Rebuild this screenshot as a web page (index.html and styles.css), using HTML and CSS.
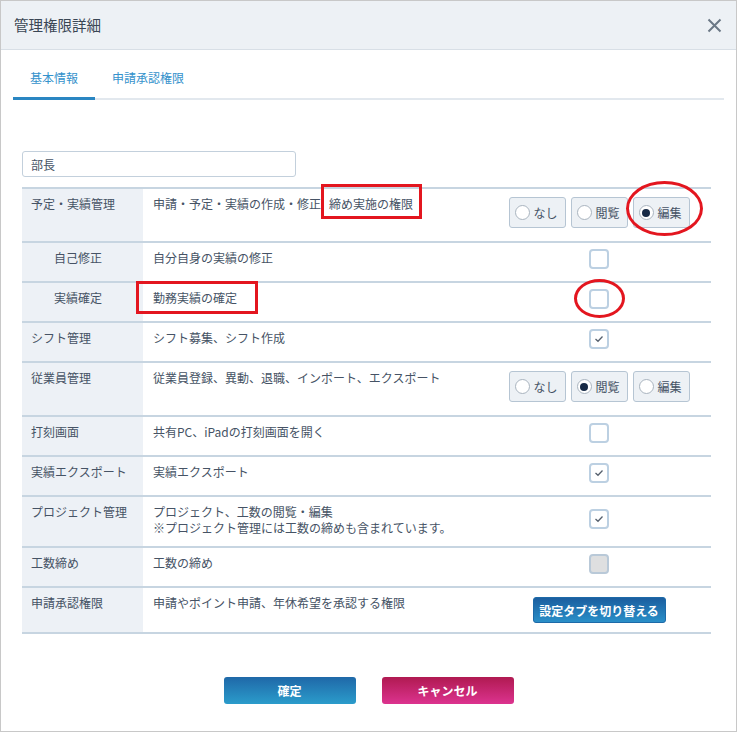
FILE: index.html
```html
<!DOCTYPE html>
<html lang="ja">
<head>
    <meta charset="UTF-8">
    <meta name="viewport" content="width=device-width, initial-scale=1.0">
    <title>管理権限詳細</title>
    <link rel="stylesheet" href="styles.css">
</head>
<body>
    <div class="dialog">
        <div class="dialog-header">
            <h1>管理権限詳細</h1>
            <span class="close-btn">
                <svg width="15" height="15" viewBox="0 0 15 15"><path d="M1.5 1.5 L13.5 13.5 M13.5 1.5 L1.5 13.5" stroke="#6b7886" stroke-width="2" fill="none"/></svg>
            </span>
        </div>

        <ul class="tabs">
            <li class="active">基本情報</li>
            <li>申請承認権限</li>
        </ul>

        <div class="dialog-body">
            <input class="role-name" type="text" value="部長">

            <table class="perm-table">
                <colgroup>
                    <col class="col-label">
                    <col class="col-desc">
                    <col class="col-ctrl">
                </colgroup>
                <tr>
                    <td class="label-cell">予定・実績管理</td>
                    <td class="desc-cell">申請・予定・実績の作成・修正<span class="mark-rect mark-a">締め実施の権限</span></td>
                    <td class="ctrl-cell">
                        <div class="radio-group">
                            <span class="radio-btn"><span class="radio-dot"></span>なし</span>
                            <span class="radio-btn"><span class="radio-dot"></span>閲覧</span>
                            <span class="radio-btn mark-oval oval-a"><span class="radio-dot checked"></span>編集</span>
                        </div>
                    </td>
                </tr>
                <tr>
                    <td class="label-cell sub">自己修正</td>
                    <td class="desc-cell">自分自身の実績の修正</td>
                    <td class="ctrl-cell"><span class="check-box"></span></td>
                </tr>
                <tr>
                    <td class="label-cell sub">実績確定</td>
                    <td class="desc-cell"><span class="mark-rect mark-b">勤務実績の確定</span></td>
                    <td class="ctrl-cell"><span class="check-box mark-oval oval-b"></span></td>
                </tr>
                <tr>
                    <td class="label-cell">シフト管理</td>
                    <td class="desc-cell">シフト募集、シフト作成</td>
                    <td class="ctrl-cell"><span class="check-box checked"><svg width="10" height="8" viewBox="0 0 10 8"><path d="M1.5 4 L4 6.3 L8.5 1.5" stroke="#56606d" stroke-width="1.3" fill="none"/></svg></span></td>
                </tr>
                <tr>
                    <td class="label-cell">従業員管理</td>
                    <td class="desc-cell">従業員登録、異動、退職、インポート、エクスポート</td>
                    <td class="ctrl-cell">
                        <div class="radio-group">
                            <span class="radio-btn"><span class="radio-dot"></span>なし</span>
                            <span class="radio-btn"><span class="radio-dot checked"></span>閲覧</span>
                            <span class="radio-btn"><span class="radio-dot"></span>編集</span>
                        </div>
                    </td>
                </tr>
                <tr>
                    <td class="label-cell">打刻画面</td>
                    <td class="desc-cell">共有PC、iPadの打刻画面を開く</td>
                    <td class="ctrl-cell"><span class="check-box"></span></td>
                </tr>
                <tr>
                    <td class="label-cell">実績エクスポート</td>
                    <td class="desc-cell">実績エクスポート</td>
                    <td class="ctrl-cell"><span class="check-box checked"><svg width="10" height="8" viewBox="0 0 10 8"><path d="M1.5 4 L4 6.3 L8.5 1.5" stroke="#56606d" stroke-width="1.3" fill="none"/></svg></span></td>
                </tr>
                <tr>
                    <td class="label-cell">プロジェクト管理</td>
                    <td class="desc-cell">プロジェクト、工数の閲覧・編集<br>※プロジェクト管理には工数の締めも含まれています。</td>
                    <td class="ctrl-cell"><span class="check-box checked"><svg width="10" height="8" viewBox="0 0 10 8"><path d="M1.5 4 L4 6.3 L8.5 1.5" stroke="#56606d" stroke-width="1.3" fill="none"/></svg></span></td>
                </tr>
                <tr>
                    <td class="label-cell">工数締め</td>
                    <td class="desc-cell">工数の締め</td>
                    <td class="ctrl-cell"><span class="check-box disabled"></span></td>
                </tr>
                <tr>
                    <td class="label-cell">申請承認権限</td>
                    <td class="desc-cell">申請やポイント申請、年休希望を承認する権限</td>
                    <td class="ctrl-cell btn-cell"><button class="switch-btn">設定タブを切り替える</button></td>
                </tr>
            </table>
        </div>

        <div class="dialog-footer">
            <button class="btn btn-ok">確定</button>
            <button class="btn btn-cancel">キャンセル</button>
        </div>
    </div>
</body>
</html>
```

FILE: styles.css
```css
body {
    margin: 0;
    font-family: "Noto Sans CJK JP", "Liberation Sans", sans-serif;
    font-size: 12px;
    color: #465365;
    background: #fff;
}

.dialog {
    width: 737px;
    height: 732px;
    box-sizing: border-box;
    border: 1px solid #c8c8c8;
    background: #fff;
}

.dialog-header {
    height: 49px;
    box-sizing: border-box;
    background: #edf1f5;
    border-bottom: 1px solid #d8dfe6;
    display: flex;
    align-items: center;
    justify-content: space-between;
    padding: 0 14px 2px 13px;
}

.dialog-header h1 {
    margin: 0;
    font-size: 14.5px;
    font-weight: normal;
    color: #3a4654;
}

.close-btn {
    display: flex;
    padding-top: 2px;
}

.tabs {
    list-style: none;
    margin: 14px 12px 0 12px;
    padding: 0;
    display: flex;
    border-bottom: 2px solid #e2e8ee;
}

.tabs li {
    padding: 6px 17px 11px;
    line-height: 16px;
    color: #3592cc;
    margin-bottom: -2px;
    border-bottom: 3px solid transparent;
}

.tabs li.active {
    border-bottom-color: #2a86c2;
}

.dialog-body {
    padding: 51px 25px 0 21px;
}

.role-name {
    display: block;
    width: 274px;
    height: 26px;
    box-sizing: border-box;
    margin: 0;
    border: 1px solid #c3d0dc;
    border-radius: 3px;
    padding: 0 8px;
    font-family: inherit;
    font-size: 12px;
    color: #465365;
    outline: none;
}

.perm-table {
    margin-top: 10px;
    width: 689px;
    table-layout: fixed;
    border-collapse: collapse;
    border-top: 2px solid #c7d5e1;
}

.col-label { width: 121px; }
.col-desc { width: 344px; }
.col-ctrl { width: 224px; }

.perm-table td {
    border-bottom: 2px solid #c7d5e1;
    vertical-align: top;
    line-height: 16px;
    padding: 0;
}

.label-cell {
    background: #edf1f6;
    padding: 7px 0 10px 9px !important;
}

.label-cell.sub {
    padding-left: 32px !important;
}

.desc-cell {
    padding: 7px 10px 10px !important;
}

.ctrl-cell {
    text-align: center;
    vertical-align: middle !important;
    padding: 6px 0 12px !important;
}

.ctrl-cell.btn-cell {
    padding: 9px 0 9px !important;
}

.radio-group {
    display: inline-flex;
    gap: 5px;
    margin: 2px 0 1px;
    vertical-align: top;
}

.radio-btn {
    display: flex;
    align-items: center;
    gap: 4px;
    width: 57px;
    height: 31px;
    box-sizing: border-box;
    padding-left: 5px;
    border: 1px solid #b6c5d3;
    border-radius: 3px;
    background: #edf1f5;
    color: #465365;
}

.radio-dot {
    width: 15px;
    height: 15px;
    box-sizing: border-box;
    border: 1px solid #a9b4bf;
    border-radius: 50%;
    background: #fff;
    display: flex;
    align-items: center;
    justify-content: center;
}

.radio-dot.checked::before {
    content: "";
    width: 8px;
    height: 8px;
    border-radius: 50%;
    background: #172a46;
}

.check-box {
    display: inline-flex;
    align-items: center;
    justify-content: center;
    width: 20px;
    height: 20px;
    box-sizing: border-box;
    border: 2px solid #bcd0e2;
    border-radius: 4px;
    background: #fff;
    vertical-align: top;
}

.check-box.disabled {
    background: #dedfe0;
    border-color: #b9c9d8;
}

.switch-btn {
    width: 133px;
    height: 26px;
    border: 1px solid #1d6aa8;
    border-radius: 3px;
    background: linear-gradient(to bottom, #1b5e9f, #2a8fc8);
    color: #fff;
    font-family: inherit;
    font-size: 12px;
    font-weight: bold;
    padding: 0;
    vertical-align: top;
}

/* red annotation marks drawn over the screenshot */
.mark-rect {
    position: relative;
    display: inline-block;
    line-height: 16px;
}

.mark-rect::after {
    content: "";
    position: absolute;
    border: 3px solid #e3161f;
}

.mark-a {
    margin-left: 8px;
}

.mark-a::after {
    left: -8px;
    right: -9px;
    top: -12px;
    bottom: -7px;
}

.mark-b::after {
    left: -17px;
    right: -21px;
    top: -9px;
    bottom: -8px;
}

.mark-oval {
    position: relative;
}

.mark-oval::after {
    content: "";
    position: absolute;
    border: 3.5px solid #e3161f;
    border-radius: 50%;
}

.oval-a::after {
    left: -8px;
    right: -14px;
    top: -17px;
    bottom: -9px;
}

.oval-b::after {
    left: -17px;
    right: -18px;
    top: -12px;
    bottom: -11px;
}

.dialog-footer {
    display: flex;
    justify-content: center;
    gap: 26px;
    margin-top: 43px;
}

.btn {
    width: 132px;
    height: 27px;
    border: none;
    border-radius: 3px;
    color: #fff;
    font-family: inherit;
    font-size: 12px;
    font-weight: bold;
    padding: 0;
}

.btn-ok {
    background: linear-gradient(to bottom, #1f68a8, #2b9ccb);
}

.btn-cancel {
    background: linear-gradient(to bottom, #b01a51, #dc338f);
}
```
